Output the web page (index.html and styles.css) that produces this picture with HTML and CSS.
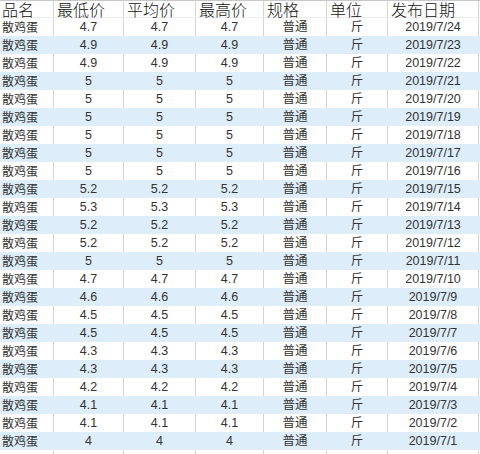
FILE: index.html
```html
<!DOCTYPE html>
<html lang="zh-CN">
<head>
<meta charset="utf-8">
<title>散鸡蛋价格</title>
<link rel="stylesheet" href="styles.css">
</head>
<body>
<div class="sheet">
  <div class="row head">
    <div class="cell">品名</div>
    <div class="cell">最低价</div>
    <div class="cell">平均价</div>
    <div class="cell">最高价</div>
    <div class="cell">规格</div>
    <div class="cell">单位</div>
    <div class="cell">发布日期</div>
  </div>
  <div class="row"><div class="cell name">散鸡蛋</div><div class="cell">4.7</div><div class="cell">4.7</div><div class="cell">4.7</div><div class="cell">普通</div><div class="cell">斤</div><div class="cell">2019/7/24</div></div>
  <div class="row alt"><div class="cell name">散鸡蛋</div><div class="cell">4.9</div><div class="cell">4.9</div><div class="cell">4.9</div><div class="cell">普通</div><div class="cell">斤</div><div class="cell">2019/7/23</div></div>
  <div class="row"><div class="cell name">散鸡蛋</div><div class="cell">4.9</div><div class="cell">4.9</div><div class="cell">4.9</div><div class="cell">普通</div><div class="cell">斤</div><div class="cell">2019/7/22</div></div>
  <div class="row alt"><div class="cell name">散鸡蛋</div><div class="cell">5</div><div class="cell">5</div><div class="cell">5</div><div class="cell">普通</div><div class="cell">斤</div><div class="cell">2019/7/21</div></div>
  <div class="row"><div class="cell name">散鸡蛋</div><div class="cell">5</div><div class="cell">5</div><div class="cell">5</div><div class="cell">普通</div><div class="cell">斤</div><div class="cell">2019/7/20</div></div>
  <div class="row alt"><div class="cell name">散鸡蛋</div><div class="cell">5</div><div class="cell">5</div><div class="cell">5</div><div class="cell">普通</div><div class="cell">斤</div><div class="cell">2019/7/19</div></div>
  <div class="row"><div class="cell name">散鸡蛋</div><div class="cell">5</div><div class="cell">5</div><div class="cell">5</div><div class="cell">普通</div><div class="cell">斤</div><div class="cell">2019/7/18</div></div>
  <div class="row alt"><div class="cell name">散鸡蛋</div><div class="cell">5</div><div class="cell">5</div><div class="cell">5</div><div class="cell">普通</div><div class="cell">斤</div><div class="cell">2019/7/17</div></div>
  <div class="row"><div class="cell name">散鸡蛋</div><div class="cell">5</div><div class="cell">5</div><div class="cell">5</div><div class="cell">普通</div><div class="cell">斤</div><div class="cell">2019/7/16</div></div>
  <div class="row alt"><div class="cell name">散鸡蛋</div><div class="cell">5.2</div><div class="cell">5.2</div><div class="cell">5.2</div><div class="cell">普通</div><div class="cell">斤</div><div class="cell">2019/7/15</div></div>
  <div class="row"><div class="cell name">散鸡蛋</div><div class="cell">5.3</div><div class="cell">5.3</div><div class="cell">5.3</div><div class="cell">普通</div><div class="cell">斤</div><div class="cell">2019/7/14</div></div>
  <div class="row alt"><div class="cell name">散鸡蛋</div><div class="cell">5.2</div><div class="cell">5.2</div><div class="cell">5.2</div><div class="cell">普通</div><div class="cell">斤</div><div class="cell">2019/7/13</div></div>
  <div class="row"><div class="cell name">散鸡蛋</div><div class="cell">5.2</div><div class="cell">5.2</div><div class="cell">5.2</div><div class="cell">普通</div><div class="cell">斤</div><div class="cell">2019/7/12</div></div>
  <div class="row alt"><div class="cell name">散鸡蛋</div><div class="cell">5</div><div class="cell">5</div><div class="cell">5</div><div class="cell">普通</div><div class="cell">斤</div><div class="cell">2019/7/11</div></div>
  <div class="row"><div class="cell name">散鸡蛋</div><div class="cell">4.7</div><div class="cell">4.7</div><div class="cell">4.7</div><div class="cell">普通</div><div class="cell">斤</div><div class="cell">2019/7/10</div></div>
  <div class="row alt"><div class="cell name">散鸡蛋</div><div class="cell">4.6</div><div class="cell">4.6</div><div class="cell">4.6</div><div class="cell">普通</div><div class="cell">斤</div><div class="cell">2019/7/9</div></div>
  <div class="row"><div class="cell name">散鸡蛋</div><div class="cell">4.5</div><div class="cell">4.5</div><div class="cell">4.5</div><div class="cell">普通</div><div class="cell">斤</div><div class="cell">2019/7/8</div></div>
  <div class="row alt"><div class="cell name">散鸡蛋</div><div class="cell">4.5</div><div class="cell">4.5</div><div class="cell">4.5</div><div class="cell">普通</div><div class="cell">斤</div><div class="cell">2019/7/7</div></div>
  <div class="row"><div class="cell name">散鸡蛋</div><div class="cell">4.3</div><div class="cell">4.3</div><div class="cell">4.3</div><div class="cell">普通</div><div class="cell">斤</div><div class="cell">2019/7/6</div></div>
  <div class="row alt"><div class="cell name">散鸡蛋</div><div class="cell">4.3</div><div class="cell">4.3</div><div class="cell">4.3</div><div class="cell">普通</div><div class="cell">斤</div><div class="cell">2019/7/5</div></div>
  <div class="row"><div class="cell name">散鸡蛋</div><div class="cell">4.2</div><div class="cell">4.2</div><div class="cell">4.2</div><div class="cell">普通</div><div class="cell">斤</div><div class="cell">2019/7/4</div></div>
  <div class="row alt"><div class="cell name">散鸡蛋</div><div class="cell">4.1</div><div class="cell">4.1</div><div class="cell">4.1</div><div class="cell">普通</div><div class="cell">斤</div><div class="cell">2019/7/3</div></div>
  <div class="row"><div class="cell name">散鸡蛋</div><div class="cell">4.1</div><div class="cell">4.1</div><div class="cell">4.1</div><div class="cell">普通</div><div class="cell">斤</div><div class="cell">2019/7/2</div></div>
  <div class="row alt"><div class="cell name">散鸡蛋</div><div class="cell">4</div><div class="cell">4</div><div class="cell">4</div><div class="cell">普通</div><div class="cell">斤</div><div class="cell">2019/7/1</div></div>
  <div class="row filler"><div class="cell"></div><div class="cell"></div><div class="cell"></div><div class="cell"></div><div class="cell"></div><div class="cell"></div><div class="cell"></div></div>
</div>
</body>
</html>
```

FILE: styles.css
```css
html, body {
  margin: 0;
  padding: 0;
  background: #ffffff;
  overflow: hidden;
}

.sheet {
  width: 480px;
  font-family: "Liberation Sans", "Noto Sans CJK SC", sans-serif;
}

.row {
  display: grid;
  grid-template-columns: 54px 70px 72px 68px 63px 61px 91px;
  height: 18px;
  font-size: 12.5px;
  line-height: 18px;
  color: #333333;
}

.cell {
  box-sizing: border-box;
  border-right: 1px solid #d4d4d4;
  text-align: center;
  white-space: nowrap;
}

.cell.name {
  text-align: left;
  padding-left: 2px;
  font-family: "Noto Sans CJK SC", sans-serif;
  font-size: 12px;
}

.head {
  box-sizing: border-box;
  border-top: 1px solid #c8c8c8;
  border-bottom: 1px solid #ececec;
  font-family: "Noto Sans CJK SC", sans-serif;
  font-size: 16px;
  font-weight: 300;
  line-height: 16px;
  color: #111111;
}

.head .cell {
  text-align: left;
  padding-left: 2px;
}

.head .cell + .cell {
  padding-left: 3px;
}

.alt {
  background: #ddeefa;
}

.alt .cell {
  border-right-color: #ddeefa;
}

.filler {
  height: 8px;
}
```
